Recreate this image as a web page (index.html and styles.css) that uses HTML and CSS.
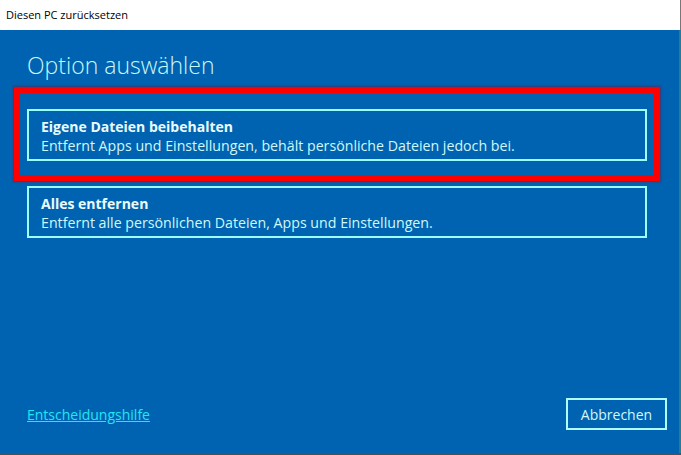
FILE: index.html
```html
<!DOCTYPE html>
<html lang="de">
<head>
    <meta charset="UTF-8">
    <meta name="viewport" content="width=device-width, initial-scale=1.0">
    <title>Diesen PC zurücksetzen</title>
    <link rel="stylesheet" href="styles.css">
</head>
<body>
    <div class="window">
        <!-- Title bar -->
        <div class="titlebar">Diesen PC zurücksetzen</div>

        <!-- Blue dialog area -->
        <div class="dialog">
            <h1 class="heading">Option auswählen</h1>

            <div class="options">
                <!-- Highlighted option -->
                <div class="highlight">
                    <button class="option">
                        <span class="option-title">Eigene Dateien beibehalten</span>
                        <span class="option-text">Entfernt Apps und Einstellungen, behält persönliche Dateien jedoch bei.</span>
                    </button>
                </div>

                <button class="option">
                    <span class="option-title">Alles entfernen</span>
                    <span class="option-text">Entfernt alle persönlichen Dateien, Apps und Einstellungen.</span>
                </button>
            </div>

            <div class="footer">
                <a href="#" class="help-link">Entscheidungshilfe</a>
                <button class="cancel-button">Abbrechen</button>
            </div>
        </div>
        <div class="bottom-edge"></div>
    </div>
</body>
</html>
```

FILE: styles.css
```css
body {
    margin: 0;
    padding: 0;
    background-color: white;
    font-family: "Open Sans", "Noto Sans", sans-serif;
}

.window {
    width: 681px;
    height: 455px;
    display: flex;
    flex-direction: column;
}

.titlebar {
    height: 30px;
    line-height: 30px;
    padding-left: 6px;
    font-size: 11px;
    color: black;
    border-right: 1px solid #777;
}

.dialog {
    flex: 1;
    display: flex;
    flex-direction: column;
    background-color: #0063b1;
    border-right: 2px solid #2c7a8a;
    padding: 0 12px 0 27px;
}

.heading {
    margin: 20px 0 0 0;
    font-size: 23px;
    font-weight: 300;
    line-height: 31px;
    color: #c8f8f8;
}

/* option cards */
.options {
    display: flex;
    flex-direction: column;
    gap: 5px;
    margin-top: 6px;
    margin-right: 20px;
}

.highlight {
    margin: 0 -13px;
    padding: 16px 7px 14px 7px;
    border: 6px solid #ff0000;
    box-shadow: 0 0 2px 1px rgba(120, 20, 60, 0.6);
}

.option {
    display: flex;
    flex-direction: column;
    align-items: flex-start;
    width: 100%;
    height: 52px;
    padding: 6px 12px;
    background: transparent;
    border: 2px solid #9ffcfc;
    font-family: inherit;
    color: #d0f8f8;
    text-align: left;
    cursor: pointer;
}

.option-title {
    font-size: 14px;
    font-weight: bold;
    line-height: 19px;
    color: #eafcfc;
}

.option-text {
    font-size: 14.2px;
    line-height: 20px;
}

/* footer */
.footer {
    margin-top: auto;
    margin-bottom: 23px;
    display: flex;
    justify-content: space-between;
    align-items: center;
}

.help-link {
    font-size: 14px;
    color: #22e6f2;
    text-decoration: underline;
}

.cancel-button {
    width: 101px;
    height: 32px;
    background: transparent;
    border: 2px solid #b0fcfc;
    color: #d0f8f8;
    font-family: inherit;
    font-size: 14px;
    cursor: pointer;
}

.bottom-edge {
    height: 2px;
    background-color: #3c5560;
}
```
